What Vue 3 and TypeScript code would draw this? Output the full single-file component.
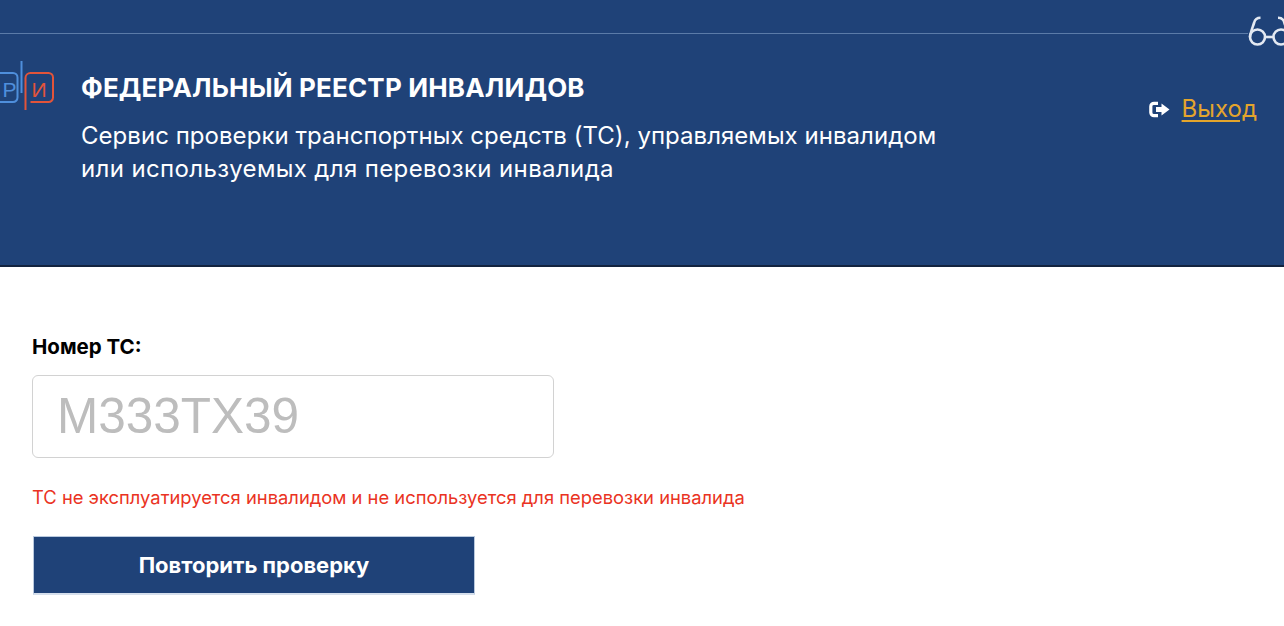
<script setup lang="ts">
const plate = 'М333ТХ39'
</script>

<template>
  <div class="page">
    <header class="head">
      <div class="top-bar">
        <svg class="glasses" width="40" height="36" viewBox="0 0 40 36" fill="none" stroke="#e3e9f2" stroke-width="2.600" aria-hidden="true">
          <circle cx="9.500" cy="25" r="7.500" />
          <circle cx="33" cy="25" r="7.500" />
          <path d="M17 25h8.500" />
          <path d="M2 25c.6-5 2.800-10 4.200-14.500C7 7.200 9 5.800 12.500 5.800" />
          <path d="M40.500 25c-.6-5-2.800-10-4.200-14.500C35.500 7.200 33.500 5.800 30 5.800" />
        </svg>
      </div>
      <div class="head-main">
        <svg class="logo" width="54" height="52" viewBox="0 0 54 52" fill="none" aria-hidden="true">
          <path d="M0 12h13a4.500 4.500 0 0 1 4.500 4.500v20a4.500 4.500 0 0 1-4.500 4.500H0" stroke="#4f8fdc" stroke-width="2" />
          <path d="M21.500 0v32" stroke="#4f8fdc" stroke-width="2" />
          <path d="M25.500 49V17a5 5 0 0 1 5-5h18a4.500 4.500 0 0 1 4.500 4.500v20a4.500 4.500 0 0 1-4.500 4.500h-18" stroke="#e2543a" stroke-width="2" />
          <text x="2.500" y="36" class="logo-p">Р</text>
          <text x="31.500" y="36" class="logo-i">И</text>
        </svg>
        <div class="titles">
          <h1 class="title">ФЕДЕРАЛЬНЫЙ РЕЕСТР ИНВАЛИДОВ</h1>
          <p class="subtitle">Сервис проверки транспортных средств (ТС), управляемых инвалидом<br /><span class="subtitle-second">или используемых для перевозки инвалида</span></p>
        </div>
        <div class="logout">
          <svg width="21" height="17" viewBox="0 0 21 17" aria-hidden="true">
            <path d="M9 2.300H5A3.200 3.200 0 0 0 1.800 5.500v6A3.200 3.200 0 0 0 5 14.700h4" fill="none" stroke="#fff" stroke-width="3.200" />
            <path d="M7 6h5.500V2.500L20.500 8.500l-8 6V11H7z" fill="#fff" />
          </svg>
          <a class="logout-link" href="#">Выход</a>
        </div>
      </div>
    </header>

    <main class="body">
      <label class="label">Номер ТС:</label>
      <input class="plate" :value="plate" disabled />
      <p class="error">ТС не эксплуатируется инвалидом и не используется для перевозки инвалида</p>
      <button class="retry" type="button">Повторить проверку</button>
    </main>
  </div>
</template>

<style>
body {
  background: #fff;
  overflow: hidden;
}
</style>

<style scoped>
.page {
  font-family: "Inter", "Open Sans", sans-serif;
  color: #000;
}

.head {
  height: 267px;
  box-sizing: border-box;
  background: #1f4278;
  border-bottom: 2px solid #13233f;
  position: relative;
  overflow: hidden;
}

.top-bar {
  height: 33px;
  border-bottom: 1px solid #5b7ba8;
  margin-right: 36px;
}

.glasses {
  position: absolute;
  top: 12px;
  left: 1248px;
}

.head-main {
  display: flex;
  align-items: flex-start;
  padding-top: 27px;
  padding-right: 27px;
}

.logo {
  flex: none;
  margin-right: 27px;
}

.logo-p,
.logo-i {
  font-family: "Liberation Sans", sans-serif;
  font-size: 21px;
}

.logo-p {
  fill: #4f8fdc;
}

.logo-i {
  fill: #e2543a;
}

.titles {
  flex: 1;
  color: #fff;
}

.title {
  margin: 12px 0 0;
  font-size: 26px;
  line-height: 30px;
  font-weight: 700;
  letter-spacing: 0.170px;
}

.subtitle {
  margin: 16px 0 0;
  font-size: 24px;
  line-height: 33px;
  font-weight: 400;
  letter-spacing: 0.040px;
}

.subtitle-second {
  letter-spacing: 0.370px;
}

.logout {
  display: flex;
  align-items: center;
  gap: 12px;
  margin-top: 33px;
}

.logout-link {
  color: #e4a52c;
  font-size: 24px;
  line-height: 30px;
  text-decoration: underline;
  text-underline-offset: 3px;
  text-decoration-thickness: 2px;
}

.body {
  display: flex;
  flex-direction: column;
  align-items: flex-start;
  padding: 67px 0 0 32px;
}

.label {
  font-size: 20.500px;
  line-height: 26px;
  font-weight: 700;
}

.plate {
  width: 522px;
  height: 83px;
  box-sizing: border-box;
  margin-top: 15px;
  padding: 0 24px 2px;
  border: 1px solid #d2d2d2;
  border-radius: 6px;
  background: #fff;
  color: #bdbdbd;
  font: 400 49.500px "Liberation Sans", sans-serif;
}

.error {
  margin: 28px 0 0;
  font-size: 18.360px;
  line-height: 22px;
  color: #ea3323;
}

.retry {
  width: 442px;
  height: 59px;
  margin: 28px 0 0 1px;
  box-sizing: border-box;
  background: #1f4278;
  border: 1px solid #b9c9de;
  border-bottom-width: 2px;
  border-bottom-color: #d5dfec;
  color: #fff;
  font: 700 22px "Inter", "Open Sans", sans-serif;
  padding: 0;
}
</style>
